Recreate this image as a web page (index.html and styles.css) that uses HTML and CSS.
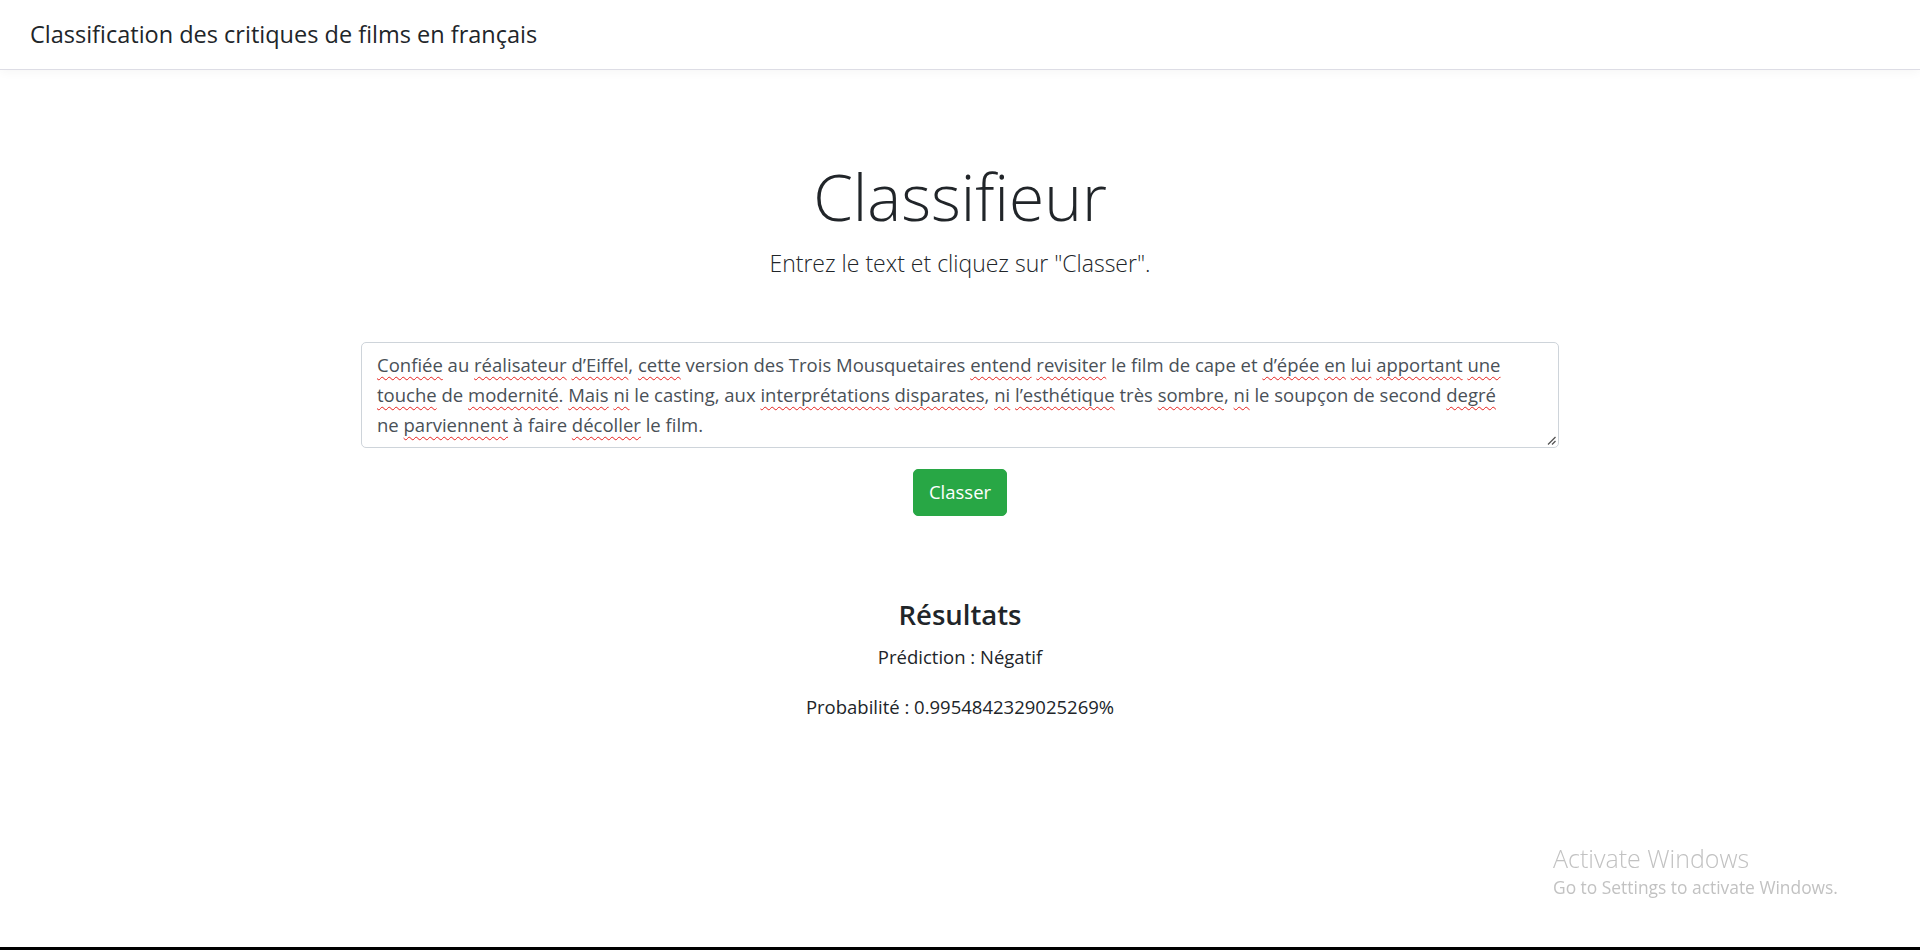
FILE: index.html
```html
<!DOCTYPE html>
<html lang="fr">
<head>
<meta charset="utf-8">
<title>Classification des critiques de films en français</title>
<link rel="stylesheet" href="styles.css">
</head>
<body>
<div class="page">
  <nav class="navbar">
    <span class="brand">Classification des critiques de films en français</span>
  </nav>
  <main class="main">
    <header class="hero">
      <h1 class="hero-title">Classifieur</h1>
      <p class="hero-lead">Entrez le text et cliquez sur "Classer".</p>
    </header>
    <form class="classify-form">
      <div class="review-box">
        <div class="review-input" contenteditable="true" spellcheck="false"><span class="sp">Confiée</span> au <span class="sp">réalisateur</span> <span class="sp">d’Eiffel</span>, <span class="sp">cette</span> version des Trois Mousquetaires <span class="sp">entend</span> <span class="sp">revisiter</span> le film de cape et <span class="sp">d’épée</span> <span class="sp">en</span> <span class="sp">lui</span> <span class="sp">apportant</span> <span class="sp">une</span><br><span class="sp">touche</span> de <span class="sp">modernité</span>. <span class="sp">Mais</span> <span class="sp">ni</span> le casting, aux <span class="sp">interprétations</span> <span class="sp">disparates</span>, <span class="sp">ni</span> <span class="sp">l’esthétique</span> très <span class="sp">sombre</span>, <span class="sp">ni</span> le soupçon de second <span class="sp">degré</span><br>ne <span class="sp">parviennent</span> à faire <span class="sp">décoller</span> le film.</div>
        <svg class="grip" width="9" height="9" viewBox="0 0 9 9" aria-hidden="true"><path d="M1 8.5 L8.5 1 M5 8.5 L8.5 5" stroke="#555" stroke-width="1.3" fill="none"/></svg>
      </div>
      <button type="button" class="btn-classify">Classer</button>
    </form>
    <section class="results">
      <h4 class="results-title">Résultats</h4>
      <p class="result-line">Prédiction : Négatif</p>
      <p class="result-line">Probabilité : 0.9954842329025269%</p>
    </section>
  </main>
  <div class="taskbar-edge"></div>
</div>
<div class="watermark">
  <div class="wm-title">Activate Windows</div>
  <div class="wm-sub">Go to Settings to activate Windows.</div>
</div>
</body>
</html>
```
FILE: styles.css
```css
* { box-sizing: border-box; }
html, body { margin: 0; padding: 0; }
body {
  font-family: "Open Sans", "Noto Sans", sans-serif;
  color: #212529;
  background: #fff;
  font-size: 18.5px;
  line-height: 30px;
}
.page {
  min-height: 100vh;
  display: flex;
  flex-direction: column;
}
.navbar {
  height: 70px;
  border-bottom: 1px solid #dddde5;
  box-shadow: 0 3px 9px rgba(0,0,0,0.035);
  display: flex;
  align-items: center;
  padding-left: 30px;
}
.brand {
  font-size: 23.5px;
  line-height: 69px;
  color: #212529;
  white-space: nowrap;
}
.main {
  flex: 1;
  display: flex;
  flex-direction: column;
  align-items: center;
}
.hero {
  margin-top: 87px;
  text-align: center;
}
.hero-title {
  margin: 0;
  font-size: 64px;
  font-weight: 300;
  line-height: 80px;
}
.hero-lead {
  margin: 9px 0 0;
  font-size: 23px;
  font-weight: 300;
  line-height: 34.5px;
}
.classify-form {
  margin-top: 61px;
  width: 1198px;
  display: flex;
  flex-direction: column;
  align-items: center;
}
.review-box {
  position: relative;
  width: 100%;
}
.review-input {
  width: 100%;
  height: 106px;
  border: 1px solid #ced4da;
  border-radius: 5px;
  padding: 7.5px 15px;
  color: #495057;
  font-size: 18.5px;
  line-height: 30px;
  overflow: hidden;
  outline: none;
}
.sp {
  text-decoration: underline wavy #e5201c;
  text-decoration-thickness: 1.3px;
  text-underline-offset: 4px;
}
.grip {
  position: absolute;
  right: 3px;
  bottom: 3px;
}
.btn-classify {
  margin-top: 21px;
  height: 47px;
  padding: 7.5px 15px;
  background: #28a745;
  border: 1px solid #28a745;
  border-radius: 5px;
  color: #fff;
  font-family: inherit;
  font-size: 18.5px;
  line-height: 30px;
  cursor: pointer;
}
.results {
  margin-top: 81px;
  text-align: center;
}
.results-title {
  margin: 0 0 9.5px;
  font-size: 27.5px;
  font-weight: 600;
  line-height: 36px;
}
.result-line {
  margin: 0 0 20px;
  font-size: 18.5px;
  line-height: 30px;
}
.taskbar-edge {
  height: 3px;
  background: #000;
}
.watermark {
  position: fixed;
  left: 1553px;
  top: 844px;
  color: #c2c2c2;
  pointer-events: none;
}
.wm-title {
  font-size: 25px;
  font-weight: 300;
  line-height: 29px;
  white-space: nowrap;
}
.wm-sub {
  margin-top: 1px;
  font-size: 17.4px;
  line-height: 27px;
  white-space: nowrap;
}
```
